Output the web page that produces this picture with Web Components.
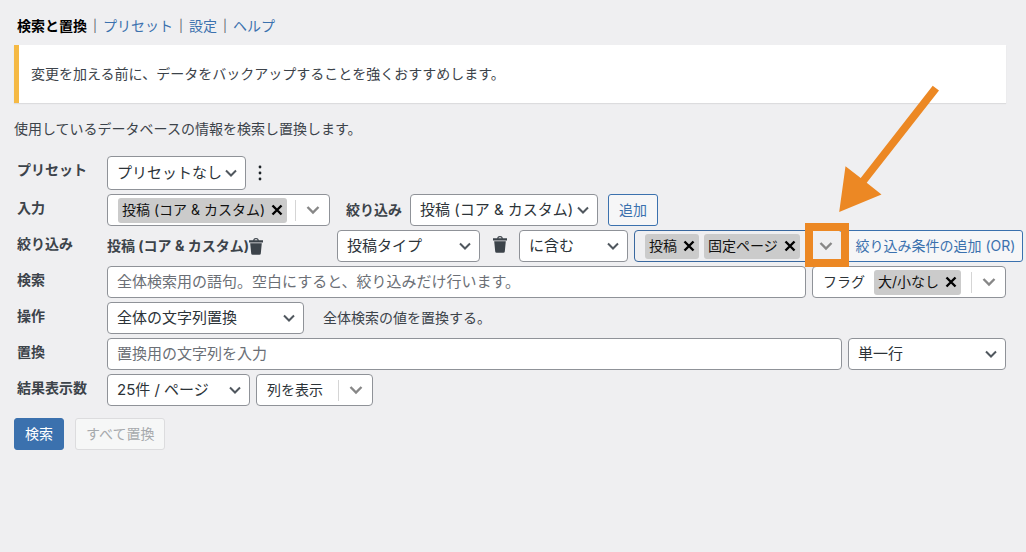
<!DOCTYPE html>
<html lang="ja">
<head>
<meta charset="utf-8">
<meta name="viewport" content="width=device-width, initial-scale=1">
<title>検索と置換</title>
<style>
  body {
    margin: 0;
    background: #efeff1;
    color: #3c434a;
    font: 14px/20px Inter, "Noto Sans CJK JP", sans-serif;
    --link: #3b71ae;
    --line: #8f9298;
    --accent: #ec8824;
  }
</style>
</head>
<body>
<search-replace-page></search-replace-page>
<script>
const define = (name, html) => {
  const template = document.createElement('template');
  template.innerHTML = html;
  customElements.define(name, class extends HTMLElement {
    static formAssociated = true;
    constructor() {
      super();
      this.attachShadow({ mode: 'open' }).append(template.content.cloneNode(true));
    }
  });
};

/* Bar of page links separated by rules */
define('page-tabs', `
  <style>
    :host { display: block; padding-left: 3px; }
    nav { display: flex; gap: 6px; }
    ::slotted(span) { color: #646970; font-size: 12px; }
  </style>
  <nav><slot></slot></nav>`);

/* Warning notice with a coloured edge */
define('notice-box', `
  <style>
    :host { display: block; margin-top: 9px; padding: 19px 12px; background: #fff;
      border-left: 5px solid #f5b944; box-shadow: 0 1px 1px rgba(0, 0, 0, .08); }
    p { margin: 0; }
  </style>
  <p><slot></slot></p>`);

/* One line of the form: label column and controls */
define('form-row', `
  <style>
    :host { display: grid; grid-template-columns: 93px minmax(0, 1fr); }
    .label { padding: 4px 0 0 3px; font-weight: 700; white-space: nowrap; }
    .fields { display: flex; align-items: center; gap: 6px; min-height: 32px; }
    :host([wide]) .fields { margin-right: -17px; }
    :host([tall]) .fields { min-height: 34px; }
  </style>
  <div class="label"><slot name="label"></slot></div>
  <div class="fields"><slot></slot></div>`);

/* Frame with a chevron around a native select */
define('drop-down', `
  <style>
    :host { display: grid; align-items: center; flex: none; height: 32px; }
    :host([tall]) { height: 34px; }
    ::slotted(select) { grid-area: 1 / 1; box-sizing: border-box; width: 100%; height: 100%;
      margin: 0; padding: 0 20px 0 9px; appearance: none; border: 1px solid var(--line);
      border-radius: 4px; background: #fff; color: #2c3338;
      font: 15px/20px Inter, "Noto Sans CJK JP", sans-serif; }
    svg { grid-area: 1 / 1; justify-self: end; margin-right: 8px; z-index: 1; pointer-events: none; }
  </style>
  <slot></slot>
  <svg width="14" height="10" viewBox="0 0 14 10" fill="none" stroke="#50575e" stroke-width="2" aria-hidden="true"><path d="M2 2.500l5 5 5-5"/></svg>`);

/* Chosen value inside a multi picker */
define('value-chip', `
  <style>
    :host { display: flex; align-items: center; flex: none; height: 25px; padding: 0 4px;
      gap: 6px; border-radius: 3px; background: #cbcbcb; color: #111; white-space: nowrap; }
    button { display: flex; margin: 0; padding: 0; border: 0; background: none; color: #000; }
  </style>
  <slot></slot>
  <button type="button" aria-label="削除"><svg width="12" height="12" viewBox="0 0 12 12" stroke="currentColor" stroke-width="2.400"><path d="M1.500 1.500l9 9m0-9l-9 9"/></svg></button>`);

/* Picker that holds several chips */
define('multi-picker', `
  <style>
    :host { display: flex; align-items: center; flex: none; box-sizing: border-box; height: 32px;
      padding-left: 10px; border: 1px solid var(--line); border-radius: 4px; background: #fff;
      color: #2c3338; white-space: nowrap; }
    :host([active]) { border-color: #39689f; background: none; }
    .values { display: flex; align-items: center; flex: 1; gap: 5px; }
    button { display: flex; align-items: center; justify-content: center; box-sizing: border-box;
      width: 34px; height: 21px; margin: 0; padding: 0; border: 0; border-left: 1px solid #d5d5d5;
      background: none; }
  </style>
  <div class="values"><slot></slot></div>
  <button type="button" aria-label="開く"><svg width="14" height="10" viewBox="0 0 14 10" fill="none" stroke="#878787" stroke-width="2.400"><path d="M1.500 2l5.500 5.500L12.500 2"/></svg></button>`);

/* Trash can button */
define('trash-button', `
  <style>
    :host { display: flex; flex: none; }
    button { display: flex; margin: 0; padding: 0; border: 0; background: none; color: #3c434a; }
  </style>
  <button type="button" aria-label="削除"><svg width="14" height="17" viewBox="0 0 14 17" fill="currentColor"><path d="M0 2.200h4.200C4.400.8 5.400 0 7 0s2.600.8 2.800 2.200H14v2.300H0zM5.400 2.200h3.200C8.400 1.500 7.900 1.200 7 1.200s-1.400.3-1.600 1z" fill-rule="evenodd"/><path d="M1.200 5.300h11.600l-1 10.200q-.1 1.300-1.400 1.300H3.600q-1.300 0-1.400-1.300z"/></svg></button>`);

/* Arrow and frame that point out the chevron of the control they wrap */
define('callout-mark', `
  <style>
    :host { display: block; position: relative; flex: none; }
    svg { position: absolute; right: -102px; top: -146px; z-index: 2; pointer-events: none; }
    rect { fill: none; stroke: var(--accent); stroke-width: 8px; }
    path { fill: var(--accent); }
  </style>
  <slot></slot>
  <svg width="140" height="183" viewBox="0 0 140 183" aria-hidden="true">
    <rect x="4" y="143" width="36" height="36"/>
    <path d="M127.700 1.700l6.300 4.700-72.300 92.300 14.800 11.900L34.200 128l6.300-45.700 15.200 11.700z"/>
  </svg>`);

define('search-replace-page', `
  <style>
    :host { display: block; }
    main { padding: 16px 20px 24px 14px; }
    a { color: var(--link); text-decoration: none; }
    a[aria-current] { color: #000; font-weight: 700; }
    .intro { margin: 16px 0 17px; }
    form { display: flex; flex-direction: column; gap: 4px; }
    input { flex: 1; min-width: 0; box-sizing: border-box; height: 32px; margin: 0; padding: 0 9px 2px;
      border: 1px solid var(--line); border-radius: 4px; background: #fff; color: #2c3338;
      font: 15px/20px Inter, "Noto Sans CJK JP", sans-serif; }
    input::placeholder { color: #6b6f76; opacity: 1; }
    button { box-sizing: border-box; height: 32px; margin: 0; padding: 0 10px; white-space: nowrap;
      border: 1px solid var(--link); border-radius: 3px; background: #f6f6f7; color: var(--link);
      font: 14px/20px Inter, "Noto Sans CJK JP", sans-serif; }
    .more { display: flex; align-items: center; padding: 0 6px; border: 0; background: none; color: #1d2327; }
    .sub { margin: 0 2px 0 10px; font-weight: 700; }
    .add { margin-left: 4px; }
    .target { display: flex; align-items: center; flex: 1; font-weight: 700; white-space: nowrap; }
    .mid { margin: 0 6px 4px 7px; }
    .hint { margin-left: 13px; }
    .or { flex: none; width: 180px; margin-left: -6px; padding: 0 0 0 5px; text-align: center; }
    .actions { display: flex; gap: 11px; margin-top: 8px; }
    .primary { background: var(--link); color: #fff; }
    button:disabled { border-color: #dcdcde; background: #f6f7f7; color: #a7aaad; }
    #preset { width: 139px; }
    #source { width: 223px; }
    #filter { width: 188px; }
    #kind { width: 143px; }
    #match { width: 109px; }
    #values { width: 209px; }
    #flags { width: 194px; }
    #flags span { margin-right: 4px; }
    #mode { width: 197px; }
    #lines { width: 158px; }
    #count { width: 143px; }
    #columns { width: 117px; }
  </style>
  <main>
    <page-tabs>
      <a href="#search" aria-current="page">検索と置換</a><span>|</span>
      <a href="#presets">プリセット</a><span>|</span>
      <a href="#settings">設定</a><span>|</span>
      <a href="#help">ヘルプ</a>
    </page-tabs>
    <notice-box>変更を加える前に、データをバックアップすることを強くおすすめします。</notice-box>
    <p class="intro">使用しているデータベースの情報を検索し置換します。</p>
    <form>
      <form-row tall>
        <label slot="label" for="preset">プリセット</label>
        <drop-down tall><select id="preset"><option>プリセットなし</option></select></drop-down>
        <button class="more" type="button" aria-label="メニュー"><svg width="4" height="16" viewBox="0 0 4 16" fill="currentColor"><circle cx="2" cy="2" r="1.400"/><circle cx="2" cy="8" r="1.400"/><circle cx="2" cy="14" r="1.400"/></svg></button>
      </form-row>
      <form-row>
        <label slot="label" for="source">入力</label>
        <multi-picker id="source"><value-chip>投稿 (コア &amp; カスタム)</value-chip></multi-picker>
        <label class="sub" for="filter">絞り込み</label>
        <drop-down><select id="filter"><option>投稿 (コア &amp; カスタム)</option></select></drop-down>
        <button class="add" type="button">追加</button>
      </form-row>
      <form-row wide>
        <label slot="label" for="kind">絞り込み</label>
        <div class="target">投稿 (コア &amp; カスタム)<trash-button></trash-button></div>
        <drop-down><select id="kind"><option>投稿タイプ</option></select></drop-down>
        <trash-button class="mid"></trash-button>
        <drop-down><select id="match" aria-label="条件"><option>に含む</option></select></drop-down>
        <callout-mark><multi-picker id="values" active><value-chip>投稿</value-chip><value-chip>固定ページ</value-chip></multi-picker></callout-mark>
        <button class="or" type="button">絞り込み条件の追加 (OR)</button>
      </form-row>
      <form-row>
        <label slot="label" for="query">検索</label>
        <input id="query" type="text" placeholder="全体検索用の語句。空白にすると、絞り込みだけ行います。">
        <multi-picker id="flags"><span>フラグ</span><value-chip>大/小なし</value-chip></multi-picker>
      </form-row>
      <form-row>
        <label slot="label" for="mode">操作</label>
        <drop-down><select id="mode"><option>全体の文字列置換</option></select></drop-down>
        <span class="hint">全体検索の値を置換する。</span>
      </form-row>
      <form-row>
        <label slot="label" for="replacement">置換</label>
        <input id="replacement" type="text" placeholder="置換用の文字列を入力">
        <drop-down><select id="lines" aria-label="行"><option>単一行</option></select></drop-down>
      </form-row>
      <form-row>
        <label slot="label" for="count">結果表示数</label>
        <drop-down><select id="count"><option>25件 / ページ</option></select></drop-down>
        <multi-picker id="columns">列を表示</multi-picker>
      </form-row>
      <div class="actions">
        <button class="primary" type="submit">検索</button>
        <button type="button" disabled>すべて置換</button>
      </div>
    </form>
  </main>`);
</script>
</body>
</html>
